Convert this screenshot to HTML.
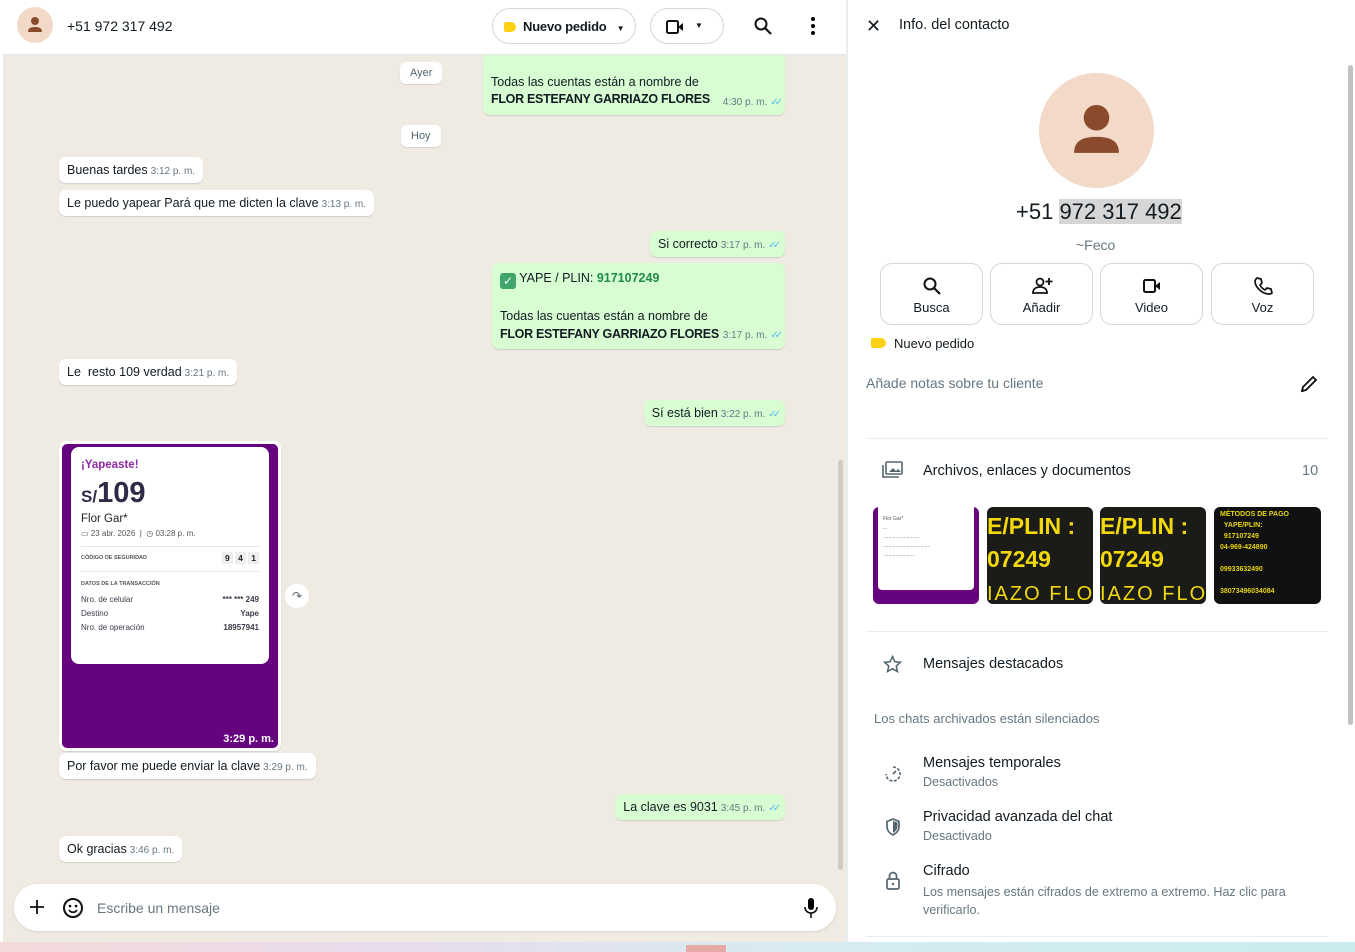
<!DOCTYPE html>
<html><head><meta charset="utf-8"><style>
*{box-sizing:border-box;margin:0;padding:0}
body{width:1355px;height:952px;overflow:hidden;font-family:"Liberation Sans",sans-serif;background:#fff;position:relative;color:#111b21}
.a{position:absolute}
.chat{left:3px;top:55px;width:843px;height:887px;background:#efeae2}
.hdr{left:3px;top:0;width:843px;height:55px;background:#fff;border-bottom:1px solid #e5e5e5}
.b{position:absolute;background:#fff;border-radius:7px;box-shadow:0 1px 1px rgba(0,0,0,.12);font-size:12.5px;padding:6px 8px;white-space:nowrap}
.o{background:#d9fdd3}
.t{font-size:10px;color:#667781;margin-left:3px}
.ck{color:#53bdeb;font-size:10px;margin-left:3px;letter-spacing:-4px}
.day{position:absolute;background:#fff;border-radius:6px;font-size:11px;color:#54656f;padding:5px 10px;box-shadow:0 1px 1px rgba(0,0,0,.1)}
.btn{position:absolute;top:263px;width:103px;height:62px;border:1px solid #d1d7db;border-radius:12px;text-align:center;font-size:13px;color:#111b21}
.btn svg{display:block;margin:12px auto 4px}
.sep{position:absolute;left:866px;width:462px;height:1px;background:#e9edef}
.sub{font-size:12.5px;color:#667781}
.bl{font-weight:bold;letter-spacing:-0.3px}
</style></head><body>
<div class="a hdr">
 <div class="a" style="left:14px;top:7px;width:36px;height:36px;border-radius:50%;background:#f2d9c8"><svg width="36" height="36" viewBox="0 0 36 36"><circle cx="18" cy="14" r="4" fill="#8a4a2b"/><path d="M11 25c0-4 3-5 7-5s7 1 7 5z" fill="#8a4a2b"/></svg></div>
 <div class="a" style="left:64px;top:18px;font-size:14px">+51 972 317 492</div>
 <div class="a" style="left:489px;top:8px;width:144px;height:36px;border:1px solid #d1d7db;border-radius:18px;font-size:13px;font-weight:bold;padding:10px 0 0 30px;letter-spacing:-0.2px">Nuevo pedido<span style="font-size:8px;margin-left:10px">▼</span><span class="a" style="left:11px;top:13px;width:12px;height:10px;background:#fcd116;border-radius:2px 5px 5px 2px"></span></div>
 <div class="a" style="left:647px;top:8px;width:74px;height:36px;border:1px solid #d1d7db;border-radius:18px"><svg class="a" style="left:14px;top:10px" width="20" height="16" viewBox="0 0 20 16"><rect x="2" y="2" width="11" height="12" rx="1.5" fill="none" stroke="#111" stroke-width="2"/><path d="M13 8l5-4v8z" fill="#111"/></svg><span class="a" style="left:44px;top:12px;font-size:8px">▼</span></div>
 <svg class="a" style="left:750px;top:16px" width="20" height="20" viewBox="0 0 20 20"><circle cx="8" cy="8" r="5.5" fill="none" stroke="#111" stroke-width="2"/><path d="M12 12l6 6" stroke="#111" stroke-width="2.2"/></svg>
 <svg class="a" style="left:806px;top:16px" width="8" height="20"><circle cx="4" cy="3" r="2"/><circle cx="4" cy="10" r="2"/><circle cx="4" cy="17" r="2"/></svg>
</div>
<div class="a chat">
 <div class="day" style="left:397px;top:7px">Ayer</div>
 <div class="b o" style="left:480px;top:0px;width:302px;height:60px;border-radius:0 0 7px 7px;padding:19px 8px 0;line-height:17px">Todas las cuentas están a nombre de<br><span class="bl">FLOR ESTEFANY GARRIAZO FLORES</span><span class="a" style="right:6px;bottom:4px"><span class="t">4:30 p. m.</span><span class="ck">✓✓</span></span></div>
 <div class="day" style="left:398px;top:70px">Hoy</div>
 <div class="b" style="left:56px;top:102px">Buenas tardes<span class="t">3:12 p. m.</span></div>
 <div class="b" style="left:56px;top:135px">Le puedo yapear Pará que me dicten la clave<span class="t">3:13 p. m.</span></div>
 <div class="b o" style="right:61px;top:176px">Si correcto<span class="t">3:17 p. m.</span><span class="ck">✓✓</span></div>
 <div class="b o" style="left:489px;top:208px;width:293px;height:86px;line-height:18px">
  <span style="display:inline-block;width:16px;height:16px;background:#3fa66c;border-radius:3px;color:#fff;font-size:12px;text-align:center;line-height:16px;vertical-align:-3px">✓</span> YAPE / PLIN: <b style="color:#1f8b4c">917107249</b><br><br>Todas las cuentas están a nombre de<br><span class="bl">FLOR ESTEFANY GARRIAZO FLORES</span><span class="a" style="right:6px;bottom:4px"><span class="t">3:17 p. m.</span><span class="ck">✓✓</span></span></div>
 <div class="b" style="left:56px;top:304px">Le&nbsp; resto 109 verdad<span class="t">3:21 p. m.</span></div>
 <div class="b o" style="right:61px;top:345px">Sí está bien<span class="t">3:22 p. m.</span><span class="ck">✓✓</span></div>
 <div class="b" style="left:56px;top:386px;width:222px;height:310px;padding:3px">
  <div style="position:relative;width:216px;height:304px;background:#66037f;border-radius:5px;overflow:hidden">
   <div class="a" style="left:9px;top:3px;width:198px;height:217px;background:#fff;border-radius:8px;padding:12px 10px;white-space:normal;font-size:8px;color:#3a3a4a">
    <div style="color:#8e2ba3;font-weight:bold;font-size:11.5px">¡Yapeaste!</div>
    <div style="color:#2f2a45;font-weight:bold;margin-top:6px"><span style="font-size:17px">S/</span><span style="font-size:29px">109</span></div>
    <div style="font-size:11.5px;color:#222;margin-top:3px">Flor Gar*</div>
    <div style="margin-top:4px;color:#555">▭ 23 abr. 2026 &nbsp;| &nbsp;◷ 03:28 p. m.</div>
    <div style="border-top:1px solid #e5e5e5;margin-top:8px;padding-top:8px;font-size:5.5px;font-weight:bold;color:#555;position:relative">CÓDIGO DE SEGURIDAD<span class="a" style="right:0;top:6px;font-size:8.5px;color:#222"><span style="background:#eee;padding:1px 3px">9</span> <span style="background:#eee;padding:1px 3px">4</span> <span style="background:#eee;padding:1px 3px">1</span></span></div>
    <div style="border-top:1px solid #e5e5e5;margin-top:10px;padding-top:9px;font-size:5.5px;font-weight:bold;color:#555">DATOS DE LA TRANSACCIÓN</div>
    <div style="margin-top:8px;display:flex;justify-content:space-between"><span>Nro. de celular</span><b>*** *** 249</b></div>
    <div style="margin-top:5px;display:flex;justify-content:space-between"><span>Destino</span><b>Yape</b></div>
    <div style="margin-top:5px;display:flex;justify-content:space-between"><span>Nro. de operación</span><b>18957941</b></div>
   </div>
   <div class="a" style="right:4px;bottom:3px;color:#fff;font-size:11px;font-weight:bold">3:29 p. m.</div>
  </div>
 </div>
 <div class="a" style="left:282px;top:529px;width:24px;height:24px;border-radius:50%;background:#fff;font-size:12px;text-align:center;line-height:24px;color:#54656f">↷</div>
 <div class="b" style="left:56px;top:698px">Por favor me puede enviar la clave<span class="t">3:29 p. m.</span></div>
 <div class="b o" style="right:61px;top:739px">La clave es 9031<span class="t">3:45 p. m.</span><span class="ck">✓✓</span></div>
 <div class="b" style="left:56px;top:781px">Ok gracias<span class="t">3:46 p. m.</span></div>
 <div class="a" style="left:835px;top:405px;width:5px;height:410px;background:#cfcac2;border-radius:3px"></div>
 <div class="a" style="left:11px;top:829px;width:822px;height:47px;background:#fff;border-radius:24px;box-shadow:0 1px 2px rgba(0,0,0,.1)">
  <svg class="a" style="left:16px;top:16px" width="14" height="14" viewBox="0 0 14 14"><path d="M7 0v14M0 7h14" stroke="#111" stroke-width="1.8"/></svg>
  <svg class="a" style="left:48px;top:13px" width="22" height="22" viewBox="0 0 22 22"><circle cx="11" cy="11" r="9" fill="none" stroke="#111" stroke-width="2"/><circle cx="8" cy="9" r="1.3"/><circle cx="14" cy="9" r="1.3"/><path d="M7 13c2 3 6 3 8 0" fill="none" stroke="#111" stroke-width="1.7"/></svg>
  <span class="a" style="left:83px;top:16px;font-size:14px;color:#667781">Escribe un mensaje</span>
  <svg class="a" style="left:790px;top:13px" width="14" height="22" viewBox="0 0 14 22"><rect x="4" y="1" width="6" height="12" rx="3"/><path d="M1 10c0 4 3 6 6 6s6-2 6-6M7 16v5" fill="none" stroke="#111" stroke-width="1.6"/></svg>
 </div>
</div>
<div class="a" style="left:846px;top:0;width:2px;height:942px;background:#e9edef"></div>
<div class="a" style="left:866px;top:16px;font-size:18px">✕</div>
<div class="a" style="left:899px;top:17px;font-size:14.5px">Info. del contacto</div>
<div class="a" style="left:1039px;top:73px;width:115px;height:115px;border-radius:50%;background:#f2d9c8"><svg width="115" height="115" viewBox="0 0 36 36"><circle cx="18" cy="14" r="4" fill="#8a4a2b"/><path d="M11 25c0-4 3-5 7-5s7 1 7 5z" fill="#8a4a2b"/></svg></div>
<div class="a" style="left:1016px;top:199px;font-size:22px">+51 <span style="background:#d6d6d6">972 317 492</span></div>
<div class="a" style="left:1076px;top:237px;font-size:14px;color:#667781">~Feco</div>
<div class="btn" style="left:880px"><svg width="20" height="20" viewBox="0 0 20 20"><circle cx="8" cy="8" r="5.5" fill="none" stroke="#111" stroke-width="2"/><path d="M12 12l6 6" stroke="#111" stroke-width="2.2"/></svg>Busca</div>
<div class="btn" style="left:990px"><svg width="22" height="20" viewBox="0 0 22 20"><circle cx="9" cy="6" r="3.5" fill="none" stroke="#111" stroke-width="1.8"/><path d="M2 17c0-4 3-6 7-6s7 2 7 6z" fill="none" stroke="#111" stroke-width="1.8"/><path d="M18 2v7M14.5 5.5h7" stroke="#111" stroke-width="1.8"/></svg>Añadir</div>
<div class="btn" style="left:1100px"><svg width="20" height="20" viewBox="0 0 20 16"><rect x="2" y="2" width="11" height="12" rx="1.5" fill="none" stroke="#111" stroke-width="2"/><path d="M13 8l5-4v8z" fill="#111"/></svg>Video</div>
<div class="btn" style="left:1211px"><svg width="20" height="20" viewBox="0 0 20 20"><path d="M4 2l4 1 1 4-2 2c1 2 3 4 5 5l2-2 4 1 1 4c-1 1-2 1-3 1C9 18 2 11 2 5c0-1 1-2 2-3z" fill="none" stroke="#111" stroke-width="1.7"/></svg>Voz</div>
<div class="a" style="left:871px;top:338px;width:15px;height:10px;background:#fcd116;border-radius:2px 5px 5px 2px"></div>
<div class="a" style="left:894px;top:336px;font-size:13px">Nuevo pedido</div>
<div class="a" style="left:866px;top:375px;font-size:14px;color:#667781">Añade notas sobre tu cliente</div>
<svg class="a" style="left:1300px;top:375px" width="18" height="18" viewBox="0 0 18 18"><path d="M2 16l1-4L13 2l3 3L6 15z" fill="none" stroke="#111" stroke-width="1.8"/><path d="M2 16l1.5-.5" stroke="#111" stroke-width="2"/></svg>
<div class="sep" style="top:438px"></div>
<svg class="a" style="left:882px;top:461px" width="22" height="18" viewBox="0 0 22 18"><rect x="4" y="1" width="16" height="12" rx="1" fill="none" stroke="#54656f" stroke-width="1.6"/><path d="M1 4v12h16" fill="none" stroke="#54656f" stroke-width="1.6"/><path d="M7 11l4-4 3 3 2-2 3 3z" fill="#54656f"/></svg>
<div class="a" style="left:923px;top:463px;font-size:14.5px">Archivos, enlaces y documentos</div>
<div class="a" style="left:1302px;top:463px;font-size:14.5px;color:#667781">10</div>
<div class="a" style="left:873px;top:507px;width:106px;height:97px;background:#66037f;border-radius:6px;overflow:hidden"><div style="margin:0 5px;height:83px;background:#fff;border-radius:0 0 4px 4px;font-size:5px;color:#555;padding:8px 5px;line-height:9px">Flor Gar*<br>...<br>..........................<br>..................................<br>.......................</div></div>
<div class="a" style="left:987px;top:507px;width:106px;height:97px;background:#1b1b18;border-radius:6px;overflow:hidden;color:#f2d90c;font-weight:bold;font-size:23px;line-height:33px;white-space:nowrap;padding-top:3px">E/PLIN :<br>07249<br><span style="font-weight:normal;font-size:20px;letter-spacing:2px">IAZO FLOR</span></div>
<div class="a" style="left:1100px;top:507px;width:106px;height:97px;background:#1b1b18;border-radius:6px;overflow:hidden;color:#f2d90c;font-weight:bold;font-size:23px;line-height:33px;white-space:nowrap;padding-top:3px">E/PLIN :<br>07249<br><span style="font-weight:normal;font-size:20px;letter-spacing:2px">IAZO FLOR</span></div>
<div class="a" style="left:1214px;top:507px;width:107px;height:97px;background:#111;border-radius:6px;overflow:hidden;color:#e6d40f;font-size:7px;font-weight:bold;line-height:11px;padding:2px 6px">MÉTODOS DE PAGO<br>&nbsp;&nbsp;YAPE/PLIN:<br>&nbsp;&nbsp;917107249<br>04-969-424890<br><br>09933632490<br><br>38073496034084<br><br>0011 0240 0001</div>
<div class="sep" style="top:631px"></div>
<svg class="a" style="left:883px;top:655px" width="19" height="18" viewBox="0 0 24 23"><path d="M12 2l3 6.5 7 .8-5.2 4.8 1.5 7L12 17.5 5.7 21l1.5-7L2 9.3l7-.8z" fill="none" stroke="#54656f" stroke-width="2"/></svg>
<div class="a" style="left:923px;top:656px;font-size:14.5px">Mensajes destacados</div>
<div class="a" style="left:874px;top:711px;font-size:13px;color:#667781">Los chats archivados están silenciados</div>
<svg class="a" style="left:884px;top:765px" width="18" height="18" viewBox="0 0 18 18"><path d="M9 2a7 7 0 1 1-7 7" fill="none" stroke="#54656f" stroke-width="1.6" stroke-dasharray="3 1.5"/><path d="M9 9l3-3" stroke="#54656f" stroke-width="1.6"/></svg>
<div class="a" style="left:923px;top:755px;font-size:14.5px">Mensajes temporales</div>
<div class="a sub" style="left:923px;top:775px">Desactivados</div>
<svg class="a" style="left:885px;top:818px" width="16" height="18" viewBox="0 0 16 18"><path d="M8 1l6 2.5v5c0 4-3 7-6 8.5-3-1.5-6-4.5-6-8.5v-5z" fill="none" stroke="#54656f" stroke-width="1.7"/><path d="M8 3v12c2.5-1.5 4.5-3.5 4.5-7V4.5z" fill="#54656f"/></svg>
<div class="a" style="left:923px;top:809px;font-size:14.5px">Privacidad avanzada del chat</div>
<div class="a sub" style="left:923px;top:829px">Desactivado</div>
<svg class="a" style="left:885px;top:871px" width="16" height="20" viewBox="0 0 16 20"><rect x="2" y="8" width="12" height="10" rx="1.5" fill="none" stroke="#54656f" stroke-width="1.7"/><path d="M4.5 8V5a3.5 3.5 0 017 0v3" fill="none" stroke="#54656f" stroke-width="1.7"/><circle cx="8" cy="13" r="1.2" fill="#54656f"/></svg>
<div class="a" style="left:923px;top:863px;font-size:14.5px">Cifrado</div>
<div class="a sub" style="left:923px;top:883px;width:390px;line-height:18px">Los mensajes están cifrados de extremo a extremo. Haz clic para verificarlo.</div>
<div class="sep" style="top:936px"></div>
<div class="a" style="left:1348px;top:65px;width:5px;height:660px;background:#c1c1c1;border-radius:3px"></div>
<div class="a" style="left:0;top:942px;width:1355px;height:10px;background:linear-gradient(90deg,#f3d9d9,#e8dcef 30%,#d6ebf0 60%,#c9ecef)"></div>
<div class="a" style="left:686px;top:945px;width:40px;height:7px;background:#e6aaa6"></div>
</body></html>
